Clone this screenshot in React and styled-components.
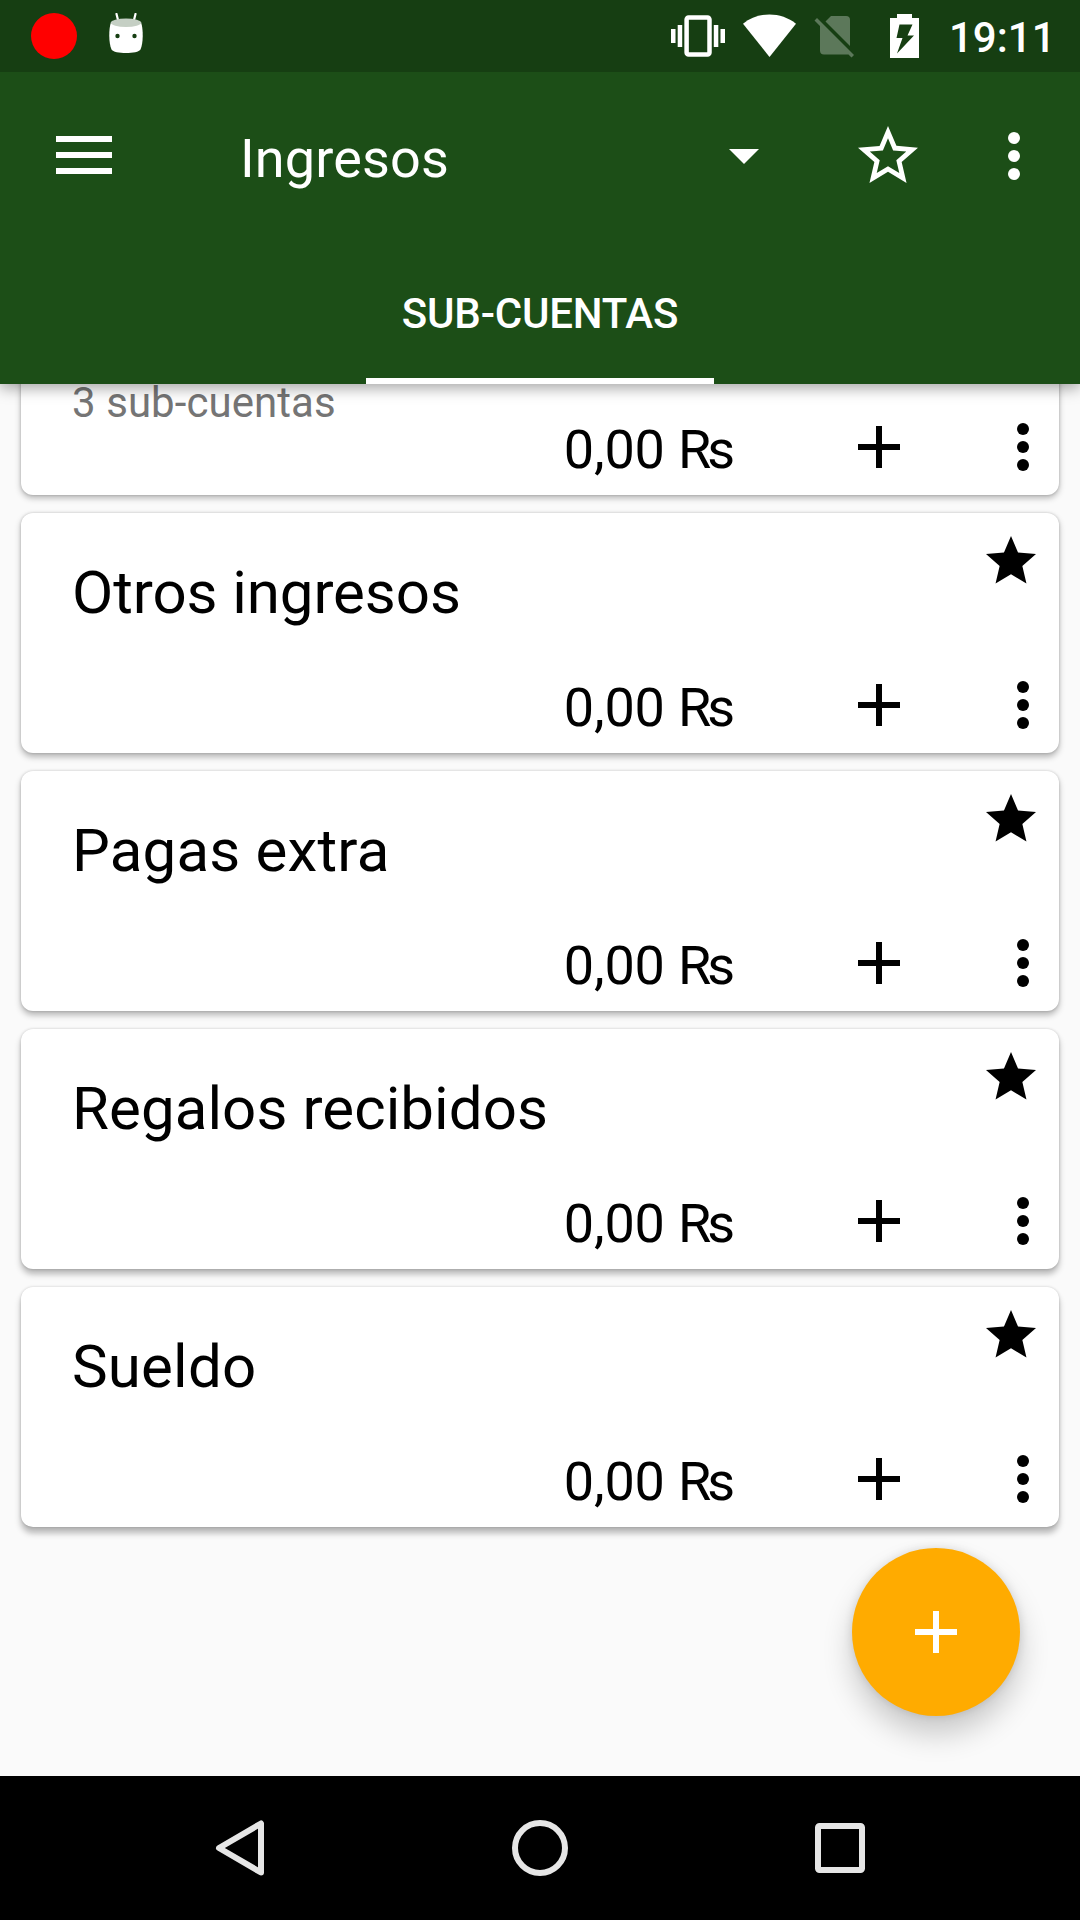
import React from "react";
import styled, { createGlobalStyle } from "styled-components";

const GlobalStyle = createGlobalStyle`
  * { box-sizing: border-box; }
  body { margin: 0; background: #fafafa; font-family: Roboto, "Noto Sans", sans-serif; }
  button { border: 0; padding: 0; background: none; font: inherit; color: inherit; }
  svg { display: block; flex: none; }
`;

const Screen = styled.div`
  width: 1080px;
  height: 1920px;
  display: flex;
  flex-direction: column;
  overflow: hidden;
  background: #fafafa;
`;

const StatusBar = styled.header`
  position: relative;
  z-index: 3;
  height: 72px;
  flex: none;
  display: flex;
  justify-content: space-between;
  background: #163e12;
  color: #fff;
`;

const Notifications = styled.div`
  display: flex;
  align-items: center;
  padding-left: 31px;
  gap: 31px;
`;

const RecordDot = styled.span`
  width: 46px;
  height: 46px;
  border-radius: 50%;
  background: #f00;
`;

const SystemIcons = styled.div`
  display: flex;
  align-items: center;
  padding-right: 27px;
`;

const Clock = styled.time`
  width: 104px;
  font-size: 42px;
  line-height: 50px;
  font-weight: 500;
  padding-top: 4px;
  text-align: left;
`;

const AppBar = styled.div`
  position: relative;
  z-index: 2;
  flex: none;
  height: 312px;
  background: #1c4e17;
  color: #fff;
  box-shadow: 0 4px 14px rgba(0, 0, 0, 0.36);
`;

const Toolbar = styled.div`
  height: 168px;
  display: flex;
  align-items: center;
  padding: 0 30px 0 48px;
`;

const IconButton = styled.button`
  width: 72px;
  height: 72px;
  display: grid;
  place-items: center;
  flex: none;
`;

const AccountPicker = styled.div`
  display: flex;
  align-items: center;
  width: 519px;
  margin-left: 120px;
`;

const PickerLabel = styled.span`
  flex: 1;
  font-size: 54px;
  line-height: 64px;
  letter-spacing: 0.15px;
  padding-top: 6px;
`;

const ToolbarActions = styled.div`
  display: flex;
  gap: 54px;
  margin-left: auto;
`;

const Tabs = styled.nav`
  height: 144px;
  display: flex;
  justify-content: center;
`;

const Tab = styled.button`
  width: 348px;
  border-bottom: 6px solid #fff;
  padding-top: 8px;
  font-size: 42px;
  font-weight: 500;
  letter-spacing: -0.2px;
  text-transform: uppercase;
`;

const AccountList = styled.main`
  flex: 1;
  min-height: 0;
  display: flex;
  flex-direction: column;
  justify-content: flex-end;
  gap: 18px;
  padding: 0 21px 249px;
`;

const Card = styled.article`
  height: 240px;
  flex: none;
  display: flex;
  flex-direction: column;
  border-radius: 12px;
  background: #fff;
  color: #000;
  box-shadow: 0 ${(p) => p.$drop}px 6px rgba(0, 0, 0, 0.28), 0 0 3px rgba(0, 0, 0, 0.18);
`;

const CardHeader = styled.div`
  height: 156px;
  flex: none;
  display: flex;
  justify-content: space-between;
  align-items: flex-start;
  padding: 18px 18px 0 51px;
`;

const AccountName = styled.h2`
  margin: 26px 0 0;
  font-size: 60px;
  font-weight: 400;
  line-height: 72px;
  letter-spacing: ${(p) => p.$tracking}px;
`;

const AccountNote = styled.p`
  margin: 105px 0 0;
  font-size: 42px;
  line-height: 50px;
  letter-spacing: 0.06px;
  color: #757575;
`;

const CardFooter = styled.div`
  display: flex;
  align-items: center;
  justify-content: flex-end;
  height: 72px;
`;

const Amount = styled.span`
  font-size: 54px;
  line-height: 64px;
  letter-spacing: -0.15px;
  padding-top: 6px;
  margin-right: 108px;
`;

const FooterActions = styled.div`
  display: flex;
  gap: 72px;
`;

const FloatingButton = styled.button`
  position: absolute;
  left: 852px;
  top: 1548px;
  z-index: 3;
  width: 168px;
  height: 168px;
  display: grid;
  place-items: center;
  border-radius: 50%;
  background: #ffab00;
  color: #fff;
  box-shadow: 0 18px 30px rgba(0, 0, 0, 0.2), 0 0 10px rgba(0, 0, 0, 0.12);
`;

const NavigationBar = styled.footer`
  height: 144px;
  flex: none;
  display: flex;
  align-items: center;
  justify-content: center;
  gap: 228px;
  background: #000;
  color: #e6e6e6;
`;

const AndroidHead = () => (
  <svg width="36" height="46" viewBox="0 0 36 46">
    <path d="M8.500 1l2 8M27.500 1l-2 8" stroke="#fff" strokeWidth="2.200" strokeLinecap="round" />
    <path d="M3 9C.6 16 .6 30 3.500 36.500 6 41.300 30 41.300 32.500 36.500 35.400 30 35.400 16 33 9z" fill="#fff" />
    <ellipse cx="18" cy="9.800" rx="15.200" ry="4.200" fill="#c5cfc4" />
    <circle cx="9.500" cy="23" r="2.200" fill="#163e12" />
    <circle cx="26.500" cy="23" r="2.200" fill="#163e12" />
  </svg>
);

const StatusIcons = () => (
  <svg width="278" height="72" viewBox="671 0 278 72" fill="#fff">
    <rect x="686.600" y="17.500" width="22.900" height="36.900" rx="2" fill="none" stroke="#fff" strokeWidth="4.500" />
    <path d="M671 29h4.500v14H671zM677.700 25h4.500v22h-4.500zM713.800 25h4.500v22h-4.500zM720.500 29h4.500v14h-4.500z" />
    <path d="M769.500 57L743 23.700C758 11.300 781 11.300 796 23.700z" />
    <g opacity=".3">
      <path d="M831 16h15a4 4 0 0 1 4 4v26L825.500 21.500z" />
      <path d="M814.500 20.500l2.500-2.500 37 37-2.500 2.500-3-3H824a4 4 0 0 1-4-4V26z" />
    </g>
    <path fillRule="evenodd" d="M897 14h15v4h7v40h-29V18h7zM899.500 24.500l-3 13.500h6l-5.500 15.500 17-18h-6.500l5-11z" />
  </svg>
);

const MenuIcon = () => (
  <svg width="56" height="40" viewBox="0 0 56 40" fill="currentColor">
    <path d="M0 0h56v6H0zM0 16h56v6H0zM0 32h56v6H0z" />
  </svg>
);

const CaretIcon = () => (
  <svg width="30" height="15" viewBox="0 0 30 15" fill="currentColor">
    <path d="M0 0h30L15 15z" />
  </svg>
);

const StarOutlineIcon = () => (
  <svg width="72" height="72" viewBox="0 0 24 24" fill="currentColor">
    <path d="M22 9.240l-7.190-.62L12 2 9.190 8.630 2 9.240l5.460 4.730L5.820 21 12 17.270 18.180 21l-1.630-7.030L22 9.240zM12 15.400l-3.760 2.270 1-4.280-3.320-2.880 4.380-.38L12 6.100l1.710 4.040 4.380.38-3.320 2.880 1 4.280L12 15.400z" />
  </svg>
);

const StarIcon = () => (
  <svg width="60" height="60" viewBox="0 0 24 24" fill="currentColor">
    <path d="M12 17.270L18.180 21l-1.640-7.030L22 9.240l-7.190-.61L12 2 9.190 8.630 2 9.240l5.460 4.730L5.820 21z" />
  </svg>
);

const MoreIcon = () => (
  <svg width="72" height="72" viewBox="0 0 24 24" fill="currentColor">
    <circle cx="12" cy="6" r="2" />
    <circle cx="12" cy="12" r="2" />
    <circle cx="12" cy="18" r="2" />
  </svg>
);

const PlusIcon = () => (
  <svg width="72" height="72" viewBox="0 0 24 24" fill="currentColor">
    <path d="M19 13h-6v6h-2v-6H5v-2h6V5h2v6h6z" />
  </svg>
);

const BackIcon = () => (
  <svg width="72" height="72" viewBox="0 0 72 72" fill="none" stroke="currentColor" strokeWidth="6" strokeLinejoin="round">
    <path d="M57 11.500v49L15 36z" />
  </svg>
);

const HomeIcon = () => (
  <svg width="72" height="72" viewBox="0 0 72 72" fill="none" stroke="currentColor" strokeWidth="6">
    <circle cx="36" cy="36" r="25" />
  </svg>
);

const RecentsIcon = () => (
  <svg width="72" height="72" viewBox="0 0 72 72" fill="none" stroke="currentColor" strokeWidth="6">
    <rect x="14" y="14" width="44" height="44" rx="1.500" />
  </svg>
);

const accounts = [
  { note: "3 sub-cuentas", drop: 3 },
  { name: "Otros ingresos", tracking: -0.08, drop: 3.5 },
  { name: "Pagas extra", tracking: 0.2, drop: 4 },
  { name: "Regalos recibidos", tracking: 0.08, drop: 5 },
  { name: "Sueldo", tracking: 0.2, drop: 6 },
];

const AccountCard = ({ account }) => (
  <Card $drop={account.drop}>
    <CardHeader>
      {account.note ? (
        <AccountNote>{account.note}</AccountNote>
      ) : (
        <>
          <AccountName $tracking={account.tracking}>{account.name}</AccountName>
          <StarIcon />
        </>
      )}
    </CardHeader>
    <CardFooter>
      <Amount>0,00 ₨</Amount>
      <FooterActions>
        <IconButton aria-label="Añadir"><PlusIcon /></IconButton>
        <IconButton aria-label="Opciones"><MoreIcon /></IconButton>
      </FooterActions>
    </CardFooter>
  </Card>
);

export default function App() {
  return (
    <Screen>
      <GlobalStyle />
      <StatusBar>
        <Notifications>
          <RecordDot />
          <AndroidHead />
        </Notifications>
        <SystemIcons>
          <StatusIcons />
          <Clock>19:11</Clock>
        </SystemIcons>
      </StatusBar>
      <AppBar>
        <Toolbar>
          <IconButton aria-label="Menú"><MenuIcon /></IconButton>
          <AccountPicker>
            <PickerLabel>Ingresos</PickerLabel>
            <CaretIcon />
          </AccountPicker>
          <ToolbarActions>
            <IconButton aria-label="Favorito"><StarOutlineIcon /></IconButton>
            <IconButton aria-label="Más"><MoreIcon /></IconButton>
          </ToolbarActions>
        </Toolbar>
        <Tabs>
          <Tab>Sub-cuentas</Tab>
        </Tabs>
      </AppBar>
      <AccountList>
        {accounts.map((account) => (
          <AccountCard key={account.name || account.note} account={account} />
        ))}
      </AccountList>
      <FloatingButton aria-label="Nueva cuenta"><PlusIcon /></FloatingButton>
      <NavigationBar>
        <BackIcon />
        <HomeIcon />
        <RecentsIcon />
      </NavigationBar>
    </Screen>
  );
}
